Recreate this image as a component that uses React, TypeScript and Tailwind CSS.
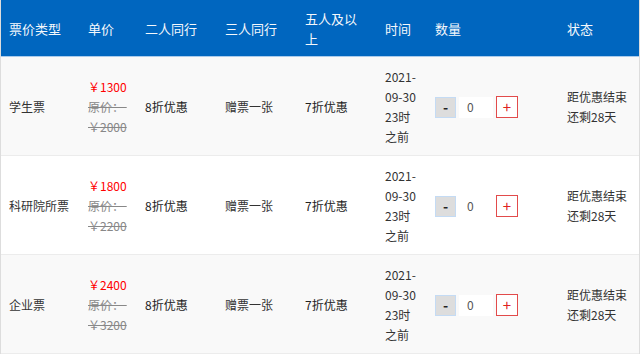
import React from "react";

const rows = [
  { type: "学生票", price: "1300", orig: "2000" },
  { type: "科研院所票", price: "1800", orig: "2200" },
  { type: "企业票", price: "2400", orig: "3200" },
];

const grid = "grid grid-cols-[79px_57px_80px_80px_80px_50px_132px_80px]";
const font = { fontFamily: '"Noto Sans CJK SC", "Noto Sans", sans-serif' };

export default function App() {
  return (
    <div className="w-[640px] h-[354px] overflow-hidden bg-white" style={font}>
      <div className="border-l border-r border-[#dddddd]">
        <div className={`${grid} bg-[#0066bf] text-[#f4f8fc] text-[13px] leading-[20px] h-[57px] pt-[1px] border-b border-[#a9cbec]`}>
          {["票价类型", "单价", "二人同行", "三人同行", "五人及以上", "时间", "数量", "状态"].map((h) => (
            <div key={h} className="px-2 flex items-center">
              <span>{h}</span>
            </div>
          ))}
        </div>
        {rows.map((r, i) => (
          <div
            key={r.type}
            className={`${grid} text-[12px] leading-[20px] text-[#333333] h-[99px] pt-[2px] border-b border-[#ececec] ${i % 2 === 0 ? "bg-[#f9f9f9]" : "bg-white"}`}
          >
            <div className="px-2 flex items-center">{r.type}</div>
            <div className="px-2 flex flex-col justify-center">
              <span className="text-[#ff0000]">￥{r.price}</span>
              <span className="text-[#888888] line-through">原价：&nbsp;</span>
              <span className="text-[#888888] line-through">￥{r.orig}</span>
            </div>
            <div className="px-2 flex items-center text-[#222222]">8折优惠</div>
            <div className="px-2 flex items-center">赠票一张</div>
            <div className="px-2 flex items-center text-[#222222]">7折优惠</div>
            <div className="px-2 flex flex-col justify-center">
              <span>2021-</span>
              <span>09-30</span>
              <span>23时</span>
              <span>之前</span>
            </div>
            <div className="px-2 flex items-center">
              <div className="w-[21px] h-[21px] bg-[#dddddd] border border-[#c4dbf4] flex items-center justify-center text-[#222222] text-[14px] font-bold">
                -
              </div>
              <div className="ml-[3px] w-[34px] h-[21px] bg-white flex items-center pl-[8px] text-[#555555]">0</div>
              <div className="ml-[3px] w-[22px] h-[22px] bg-white border border-[#e24b4b] flex items-center justify-center text-[#e02020] text-[15px]">
                +
              </div>
            </div>
            <div className="px-2 flex flex-col justify-center">
              <span>距优惠结束</span>
              <span>还剩28天</span>
            </div>
          </div>
        ))}
      </div>
    </div>
  );
}
